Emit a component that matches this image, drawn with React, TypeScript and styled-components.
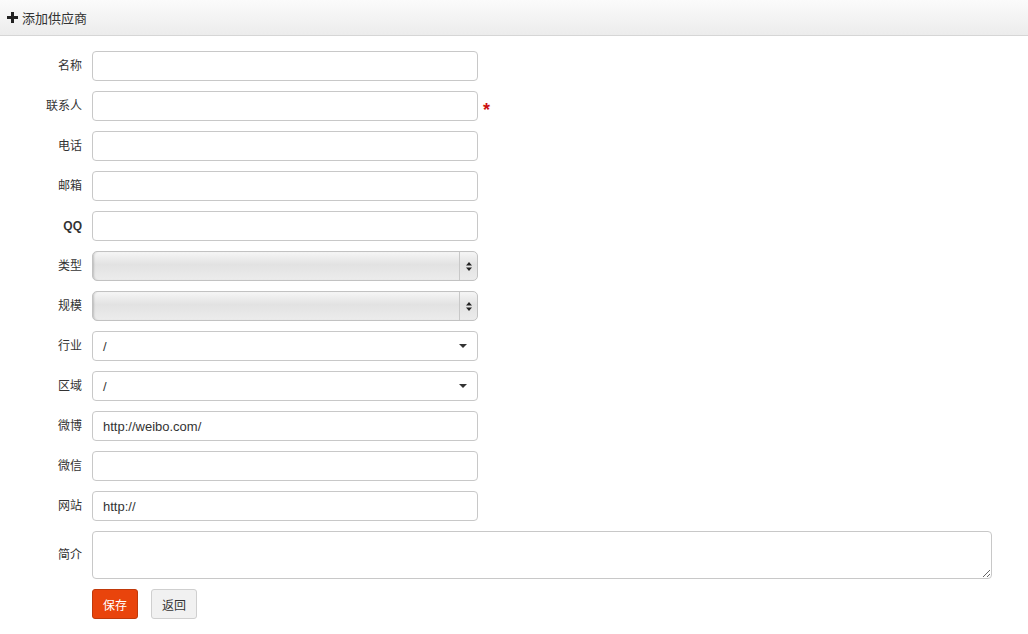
import React from 'react';
import styled, { createGlobalStyle } from 'styled-components';

const GlobalStyle = createGlobalStyle`
  html, body {
    margin: 0;
    padding: 0;
    background: #fff;
    font-family: "Liberation Sans", Arial, "Noto Sans CJK SC", sans-serif;
    color: #333;
  }
`;

const Header = styled.div`
  display: flex;
  align-items: center;
  gap: 4px;
  height: 35px;
  padding-left: 7px;
  background: linear-gradient(to bottom, #fbfbfb, #ececec);
  border-bottom: 1px solid #d6d6d6;
  font-size: 13px;
  color: #333;
`;

const Form = styled.form`
  display: flex;
  flex-direction: column;
  gap: 10px;
  padding-top: 15px;
`;

const Row = styled.div<{ tall?: boolean }>`
  display: grid;
  grid-template-columns: 82px auto 1fr;
  column-gap: 10px;
  align-items: center;
  height: ${p => (p.tall ? '48px' : '30px')};
`;

const Label = styled.label`
  text-align: right;
  font-size: 12px;
  line-height: 14px;
  color: #333;
`;

const Input = styled.input`
  box-sizing: border-box;
  width: 386px;
  height: 30px;
  padding: 0 10px;
  border: 1px solid #c8c8c8;
  border-radius: 4px;
  font-family: "Liberation Sans", Arial, sans-serif;
  font-size: 13px;
  color: #333;
  outline: none;
`;

const TextArea = styled.textarea`
  box-sizing: border-box;
  width: 900px;
  height: 48px;
  border: 1px solid #c8c8c8;
  border-radius: 4px;
  resize: both;
  outline: none;
`;

const Required = styled.span`
  color: #cc1111;
  font-size: 18px;
  font-weight: bold;
  margin-left: -5px;
  padding-top: 8px;
`;

const NativeSelect = styled.div`
  box-sizing: border-box;
  width: 386px;
  height: 30px;
  display: flex;
  border: 1px solid #c2c2c2;
  border-radius: 5px;
  background: linear-gradient(to bottom, #f6f6f6, #e2e2e2 45%, #ececec);
  box-shadow: inset 2px 0 2px -1px rgba(0, 0, 0, 0.18);
`;

const SelectBody = styled.div`
  flex: 1;
`;

const Stepper = styled.div`
  width: 17px;
  border-left: 1px solid #c8c8c8;
  display: flex;
  align-items: center;
  justify-content: center;
`;

const ChosenSelect = styled.div`
  box-sizing: border-box;
  width: 386px;
  height: 30px;
  display: flex;
  align-items: center;
  justify-content: space-between;
  padding: 0 10px;
  border: 1px solid #c8c8c8;
  border-radius: 4px;
  font-size: 13px;
  color: #333;
  background: #fff;
`;

const Caret = styled.span`
  width: 0;
  height: 0;
  border-left: 4px solid transparent;
  border-right: 4px solid transparent;
  border-top: 4px solid #333;
`;

const Actions = styled.div`
  display: flex;
  gap: 13px;
  padding-left: 92px;
`;

const Button = styled.button<{ primary?: boolean }>`
  width: 46px;
  height: 30px;
  padding: 0;
  border-radius: 3px;
  font-family: "Liberation Sans", Arial, "Noto Sans CJK SC", sans-serif;
  font-size: 12px;
  cursor: pointer;
  border: 1px solid ${p => (p.primary ? '#c0390a' : '#cfcfcf')};
  background: ${p => (p.primary ? '#e9440c' : '#f1f1f1')};
  color: ${p => (p.primary ? '#fff' : '#333')};
`;

const PlusIcon = () => (
  <svg width="11" height="11" viewBox="0 0 11 11">
    <path d="M4 0h3v4h4v3H7v4H4V7H0V4h4z" fill="#222" />
  </svg>
);

const StepArrows = () => (
  <svg width="6" height="9" viewBox="0 0 6 9">
    <path d="M3 0L6 3.5H0z" fill="#222" />
    <path d="M3 9L6 5.5H0z" fill="#222" />
  </svg>
);

const textFields = ['名称', '联系人', '电话', '邮箱'];

const App: React.FC = () => {
  return (
    <>
      <GlobalStyle />
      <Header>
        <PlusIcon />
        <span>添加供应商</span>
      </Header>
      <Form>
        {textFields.map(name => (
          <Row key={name}>
            <Label>{name}</Label>
            <Input />
            {name === '联系人' ? <Required>*</Required> : <span />}
          </Row>
        ))}
        <Row>
          <Label><b>QQ</b></Label>
          <Input />
        </Row>
        {['类型', '规模'].map(name => (
          <Row key={name}>
            <Label>{name}</Label>
            <NativeSelect>
              <SelectBody />
              <Stepper><StepArrows /></Stepper>
            </NativeSelect>
          </Row>
        ))}
        {['行业', '区域'].map(name => (
          <Row key={name}>
            <Label>{name}</Label>
            <ChosenSelect>
              <span>/</span>
              <Caret />
            </ChosenSelect>
          </Row>
        ))}
        <Row>
          <Label>微博</Label>
          <Input defaultValue="http://weibo.com/" />
        </Row>
        <Row>
          <Label>微信</Label>
          <Input />
        </Row>
        <Row>
          <Label>网站</Label>
          <Input defaultValue="http://" />
        </Row>
        <Row tall>
          <Label>简介</Label>
          <TextArea />
        </Row>
        <Actions>
          <Button type="button" primary>保存</Button>
          <Button type="button">返回</Button>
        </Actions>
      </Form>
    </>
  );
};

export default App;
